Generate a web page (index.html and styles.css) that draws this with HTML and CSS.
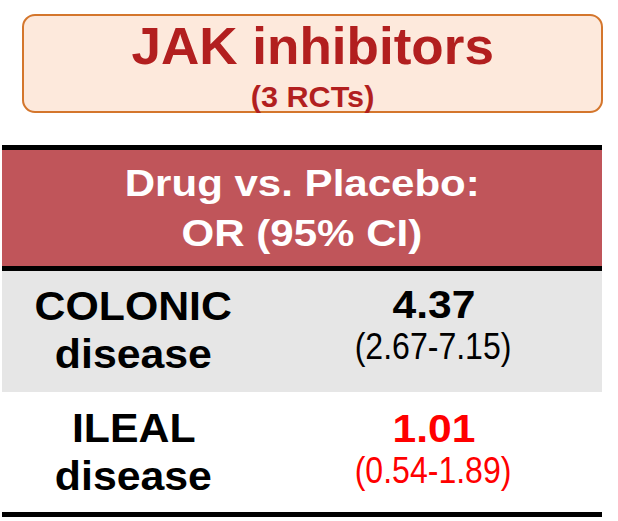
FILE: index.html
```html
<!DOCTYPE html>
<html lang="en">
<head>
<meta charset="utf-8">
<title>JAK inhibitors</title>
<link rel="stylesheet" href="styles.css">
</head>
<body>
<div class="page">
  <section class="title-box">
    <h1 class="title"><span>JAK inhibitors</span></h1>
    <p class="subtitle"><span>(3 RCTs)</span></p>
  </section>
  <section class="results">
    <div class="results-head">
      <span class="head-line">Drug vs. Placebo:</span>
      <span class="head-line">OR (95% CI)</span>
    </div>
    <div class="row row-colonic">
      <div class="label"><span>COLONIC</span><span>disease</span></div>
      <div class="value"><span class="or">4.37</span><span class="ci">(2.67-7.15)</span></div>
    </div>
    <div class="row row-ileal">
      <div class="label"><span>ILEAL</span><span>disease</span></div>
      <div class="value value-alert"><span class="or">1.01</span><span class="ci">(0.54-1.89)</span></div>
    </div>
  </section>
</div>
</body>
</html>
```
FILE: styles.css
```css
html, body {
  margin: 0;
  padding: 0;
  background: #ffffff;
}

body {
  font-family: "Liberation Sans", Arial, sans-serif;
  width: 618px;
  height: 521px;
  overflow: hidden;
}

.page {
  padding-top: 14px;
}

.title-box {
  box-sizing: border-box;
  height: 99px;
  margin: 0 15px 0 22px;
  border: 2px solid #d4762c;
  border-radius: 13px;
  background: #fde9dc;
  text-align: center;
  color: #b21f1f;
  padding-top: 4px;
}

.title {
  margin: 0;
  font-size: 52px;
  line-height: 52px;
  font-weight: 700;
}

.title span {
  display: block;
  width: fit-content;
  margin: 0 auto;
  transform: scaleX(1.02);
}

.subtitle {
  margin: 11px 0 0;
  font-size: 30px;
  line-height: 28px;
  font-weight: 700;
}

.subtitle span {
  display: block;
  width: fit-content;
  margin: 0 auto;
  transform: scaleX(1.02);
}

.results {
  margin: 32px 16px 0 2px;
  border-top: 5px solid #000000;
  border-bottom: 5px solid #000000;
}

.results-head {
  box-sizing: border-box;
  height: 121px;
  padding-top: 9px;
  background: #c0555a;
  border-bottom: 5px solid #000000;
  color: #ffffff;
  font-weight: 700;
  font-size: 37px;
  line-height: 50px;
  text-align: center;
}

.head-line {
  display: block;
  width: fit-content;
  margin: 0 auto;
  transform: scaleX(1.136);
}

.row {
  display: grid;
  grid-template-columns: 263px 1fr;
  text-align: center;
}

.row-colonic {
  height: 121px;
  background: #e6e6e6;
}

.row-ileal {
  height: 120px;
  background: #ffffff;
}

.label {
  font-weight: 700;
  font-size: 40px;
  line-height: 48px;
  color: #000000;
  padding-top: 11px;
}

.row-ileal .label {
  padding-top: 12px;
}

.label span {
  display: block;
  width: fit-content;
  margin: 0 auto;
  transform: scaleX(1.07);
}

.value {
  color: #000000;
  padding-top: 13px;
}

.row-ileal .value {
  padding-top: 16px;
}

.value-alert {
  color: #ff0000;
}

.or {
  display: block;
  width: fit-content;
  margin: 0 auto;
  font-weight: 700;
  font-size: 38px;
  line-height: 42px;
  transform: scaleX(1.12);
}

.ci {
  display: block;
  width: fit-content;
  margin: 0 auto;
  font-weight: 400;
  font-size: 36px;
  line-height: 42px;
  transform: scaleX(0.89);
}
```
